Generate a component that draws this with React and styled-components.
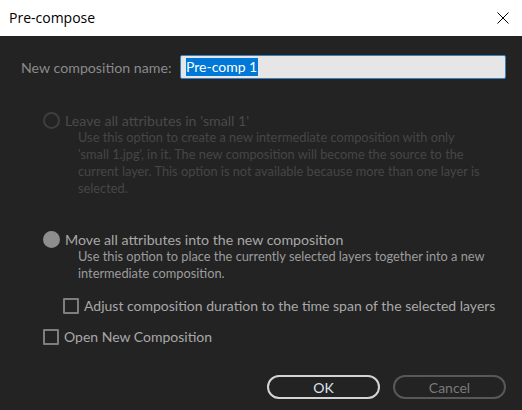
import React from "react";
import styled, { createGlobalStyle } from "styled-components";

const Global = createGlobalStyle`
  html, body { margin: 0; padding: 0; background: #232323; }
  body { width: 522px; height: 410px; overflow: hidden; }
`;

const Window = styled.div`
  width: 522px;
  height: 410px;
  display: flex;
  flex-direction: column;
  background: #232323;
  font-family: Lato, "Noto Sans", sans-serif;
`;

const TitleBar = styled.div`
  height: 36px;
  flex: none;
  background: #ffffff;
  display: flex;
  align-items: center;
  justify-content: space-between;
  padding: 0 13px 0 9px;
  box-sizing: border-box;
`;

const Title = styled.span`
  font-family: "Open Sans", "Noto Sans", sans-serif;
  font-size: 14px;
  color: #000;
  margin-top: -1px;
`;

const CloseIcon = styled.svg`
  width: 12px;
  height: 12px;
  display: block;
`;

const Body = styled.div`
  flex: 1;
  display: flex;
  flex-direction: column;
  padding: 19px 16px 11px 21px;
  box-sizing: border-box;
`;

const NameRow = styled.div`
  display: flex;
  align-items: center;
  height: 24px;
`;

const Label = styled.label`
  width: 159px;
  flex: none;
  font-size: 14.2px;
  color: #8a8a8a;
`;

const NameInput = styled.div`
  flex: 1;
  height: 24px;
  box-sizing: border-box;
  border: 1px solid #3c7fc0;
  border-radius: 2px;
  background: #e6e6e6;
  display: flex;
  align-items: center;
  padding-left: 5px;
  font-size: 14px;
`;

const Selected = styled.span`
  background: #0078d7;
  color: #ffffff;
  line-height: 18px;
  padding-right: 1px;
`;

const Options = styled.div`
  margin-left: 22px;
  display: flex;
  flex-direction: column;
`;

const Option = styled.div`
  margin-top: ${(p) => p.$top}px;
`;

const OptionHead = styled.div`
  display: flex;
  align-items: center;
  height: 17px;
  gap: 5px;
  font-size: 14.2px;
  color: ${(p) => (p.$disabled ? "#4a4a4a" : "#a8a8a8")};
`;

const Radio = styled.span`
  width: 17px;
  height: 17px;
  box-sizing: border-box;
  border-radius: 50%;
  flex: none;
  border: 2px solid ${(p) => (p.$checked ? "#8e8e8e" : "#3e3e3e")};
  background: ${(p) => (p.$checked ? "#8e8e8e" : "transparent")};
`;

const Desc = styled.div`
  margin-left: 35px;
  font-size: 12.8px;
  line-height: 17px;
  white-space: nowrap;
  color: ${(p) => (p.$disabled ? "#464646" : "#9c9c9c")};
`;

const CheckRow = styled.div`
  display: flex;
  align-items: center;
  height: 17px;
  gap: 5px;
  margin-top: ${(p) => p.$top}px;
  margin-left: ${(p) => p.$indent || 0}px;
  font-size: 14px;
  color: #a8a8a8;
`;

const Box = styled.span`
  width: 16px;
  height: 16px;
  box-sizing: border-box;
  border: 2px solid #7e7e7e;
  border-radius: 1px;
  flex: none;
`;

const Buttons = styled.div`
  margin-top: auto;
  display: flex;
  justify-content: flex-end;
  gap: 13px;
`;

const Button = styled.button`
  width: 113px;
  height: 24px;
  box-sizing: border-box;
  border-radius: 12px;
  background: transparent;
  border: 2px solid ${(p) => (p.$primary ? "#d4d4d4" : "#585858")};
  color: ${(p) => (p.$primary ? "#dbe4ee" : "#7a7a7a")};
  font-family: Lato, "Noto Sans", sans-serif;
  font-size: 14px;
  padding: 0;
  display: flex;
  align-items: center;
  justify-content: center;
`;

export default function App() {
  return (
    <Window>
      <Global />
      <TitleBar>
        <Title>Pre-compose</Title>
        <CloseIcon viewBox="0 0 12 12">
          <path d="M0.5 0.5 L11.5 11.5 M11.5 0.5 L0.5 11.5" stroke="#000" strokeWidth="1" fill="none" />
        </CloseIcon>
      </TitleBar>
      <Body>
        <NameRow>
          <Label>New composition name:</Label>
          <NameInput>
            <Selected>Pre-comp 1</Selected>
          </NameInput>
        </NameRow>
        <Options>
          <Option $top={33}>
            <OptionHead $disabled>
              <Radio />
              Leave all attributes in 'small 1'
            </OptionHead>
            <Desc $disabled>
              Use this option to create a new intermediate composition with only
              <br />
              'small 1.jpg', in it. The new composition will become the source to the
              <br />
              current layer. This option is not available because more than one layer is
              <br />
              selected.
            </Desc>
          </Option>
          <Option $top={34}>
            <OptionHead>
              <Radio $checked />
              Move all attributes into the new composition
            </OptionHead>
            <Desc>
              Use this option to place the currently selected layers together into a new
              <br />
              intermediate composition.
            </Desc>
          </Option>
          <CheckRow $top={15} $indent={20}>
            <Box />
            Adjust composition duration to the time span of the selected layers
          </CheckRow>
          <CheckRow $top={14}>
            <Box />
            Open New Composition
          </CheckRow>
        </Options>
        <Buttons>
          <Button $primary>OK</Button>
          <Button>Cancel</Button>
        </Buttons>
      </Body>
    </Window>
  );
}
